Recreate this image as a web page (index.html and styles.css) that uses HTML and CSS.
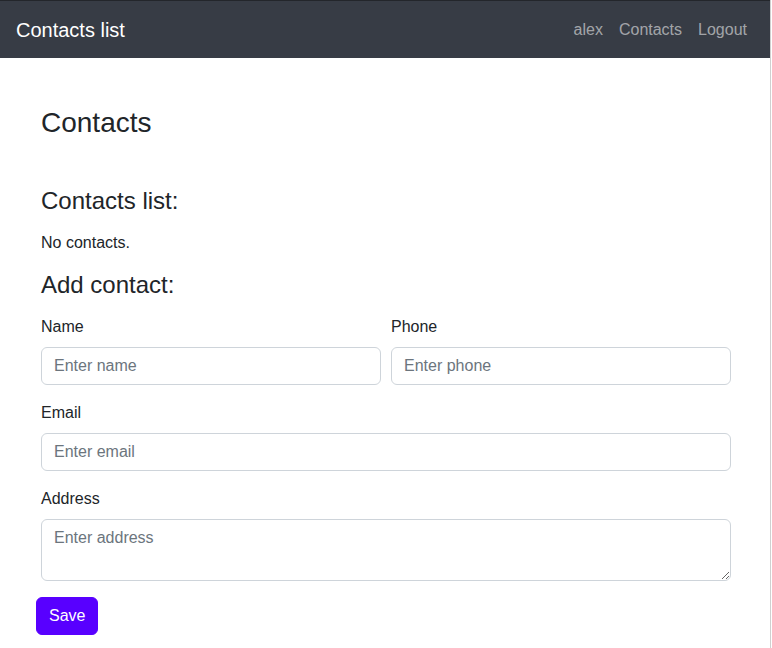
FILE: index.html
```html
<!DOCTYPE html>
<html lang="en">
<head>
<meta charset="utf-8">
<title>Contacts list</title>
<link rel="stylesheet" href="styles.css">
</head>
<body>
<div class="page">
  <nav class="navbar">
    <a class="brand" href="#">Contacts list</a>
    <ul class="nav">
      <li><a href="#">alex</a></li>
      <li><a href="#">Contacts</a></li>
      <li><a href="#">Logout</a></li>
    </ul>
  </nav>
  <main class="main">
    <h2 class="title">Contacts</h2>
    <h4 class="section">Contacts list:</h4>
    <p class="empty">No contacts.</p>
    <h4 class="section add">Add contact:</h4>
    <form class="form">
      <div class="row">
        <div class="field">
          <label class="label">Name</label>
          <input class="control" type="text" placeholder="Enter name">
        </div>
        <div class="field">
          <label class="label">Phone</label>
          <input class="control" type="text" placeholder="Enter phone">
        </div>
      </div>
      <div class="field">
        <label class="label">Email</label>
        <input class="control" type="email" placeholder="Enter email">
      </div>
      <div class="field">
        <label class="label">Address</label>
        <textarea class="control area" placeholder="Enter address"></textarea>
      </div>
      <button class="btn" type="button">Save</button>
    </form>
  </main>
</div>
</body>
</html>
```
FILE: styles.css
```css
* { box-sizing: border-box; }
html, body { margin: 0; padding: 0; background: #fff; }
body {
  font-family: "Liberation Sans", Arial, sans-serif;
  font-size: 16px;
  line-height: 1.5;
  color: #212529;
}
.page {
  width: 771px;
  min-height: 648px;
  border-right: 1px solid #d0d0d0;
}
.navbar {
  height: 58px;
  border-top: 1px solid #23262b;
  background: #373c45;
  display: flex;
  align-items: center;
  justify-content: space-between;
  padding: 0 15px 0 16px;
}
.brand {
  color: #fff;
  text-decoration: none;
  font-size: 20px;
  line-height: 30px;
}
.nav {
  list-style: none;
  margin: 0;
  padding: 0;
  display: flex;
}
.nav a {
  display: block;
  padding: 8px 8px;
  color: rgba(255,255,255,0.55);
  text-decoration: none;
  font-size: 16px;
}
.main {
  padding: 0 36px;
  width: 772px;
}
.title {
  font-size: 28px;
  font-weight: 500;
  line-height: 1.2;
  margin: 48px 0 0 5px;
}
.section {
  font-size: 24px;
  font-weight: 500;
  line-height: 1.2;
  margin: 47px 0 0 5px;
}
.empty {
  margin: 16px 0 0 5px;
}
.section.add {
  margin-top: 16px;
}
.form {
  margin-top: 15px;
  width: 700px;
}
.row {
  display: flex;
}
.row .field { flex: 1; }
.field {
  padding: 0 5px;
  margin-bottom: 16px;
}
.label {
  display: block;
  margin-bottom: 8px;
}
.control {
  display: block;
  width: 100%;
  height: 38px;
  padding: 6px 12px;
  font-family: inherit;
  font-size: 16px;
  line-height: 1.5;
  color: #212529;
  background: #fff;
  border: 1px solid #ced4da;
  border-radius: 6px;
}
.control::placeholder { color: #6c757d; opacity: 1; }
.area {
  height: 62px;
  resize: vertical;
}
.btn {
  display: inline-block;
  padding: 6px 12px;
  font-family: inherit;
  font-size: 16px;
  line-height: 1.5;
  color: #fff;
  background: #5800ff;
  border: 1px solid #5800ff;
  border-radius: 6px;
}
```
